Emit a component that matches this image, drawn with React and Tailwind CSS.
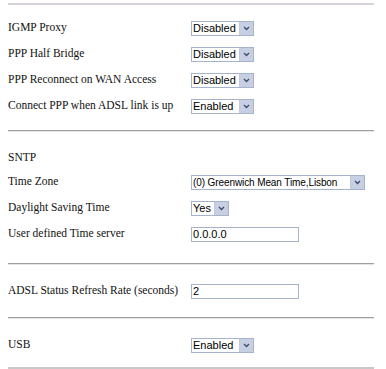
function Arrow() {
  return (
    <span className="flex w-[14px] shrink-0 items-center justify-center border-l border-[#c3c9dc] bg-[#c9cfe3]">
      <svg width="7" height="5" viewBox="0 0 7 5">
        <path d="M1 1 L3.5 3.5 L6 1" fill="none" stroke="#3c4a6b" strokeWidth="1.3" />
      </svg>
    </span>
  )
}

function Select({ value, className, textClass = "text-[11px]" }) {
  return (
    <div className={"flex h-[15px] border border-[#a5b4cc] bg-white " + className}>
      <span className={"flex-1 overflow-hidden whitespace-nowrap pl-[1px] leading-[13px] text-black " + textClass}>{value}</span>
      <Arrow />
    </div>
  )
}

function Input({ value }) {
  return (
    <div className="h-[15px] w-[108px] border border-[#a5b4cc] bg-white pl-[1px] text-[11px] leading-[13px] text-black">
      {value}
    </div>
  )
}

const serif = { fontFamily: '"Liberation Serif", "Times New Roman", serif' }

function Row({ label, children }) {
  return (
    <div className="grid h-[26px] grid-cols-[183px_1fr] items-center">
      <span className="whitespace-nowrap text-[11.5px] text-[#111]" style={serif}>{label}</span>
      <div className="flex">{children}</div>
    </div>
  )
}

function Line() {
  return <div className="h-[2px] border-t border-b border-t-[#a0a0a0] border-b-[#e4e4e4]" />
}

export default function App() {
  return (
    <div className="h-[369px] w-[386px] bg-white pl-[8px] pr-[12px] pt-[3px]" style={{ fontFamily: '"Liberation Sans", Arial, sans-serif' }}>
      <div className="h-[2px] bg-[#d6d0da]" />
      <div className="pb-[11px] pt-[10px]">
        <Row label="IGMP Proxy"><Select value="Disabled" className="w-[63px]" /></Row>
        <Row label="PPP Half Bridge"><Select value="Disabled" className="w-[63px]" /></Row>
        <Row label="PPP Reconnect on WAN Access"><Select value="Disabled" className="w-[63px]" /></Row>
        <Row label="Connect PPP when ADSL link is up"><Select value="Enabled" className="w-[63px]" /></Row>
      </div>
      <Line />
      <div className="pb-[16px] pt-[15px]">
        <div className="flex h-[22px] items-center text-[11.5px] text-[#111]" style={serif}>SNTP</div>
        <Row label="Time Zone"><Select value="(0) Greenwich Mean Time,Lisbon" className="w-[174px]" textClass="text-[10px] tracking-[-0.1px]" /></Row>
        <Row label="Daylight Saving Time"><Select value="Yes" className="w-[38px]" /></Row>
        <Row label="User defined Time server"><Input value="0.0.0.0" /></Row>
      </div>
      <Line />
      <div className="pb-[13px] pt-[13px]">
        <Row label="ADSL Status Refresh Rate (seconds)"><Input value="2" /></Row>
      </div>
      <Line />
      <div className="pb-[9px] pt-[13px]">
        <Row label="USB"><Select value="Enabled" className="w-[63px]" /></Row>
      </div>
      <div className="h-[2px] bg-[#c8c8c8]" />
    </div>
  )
}
